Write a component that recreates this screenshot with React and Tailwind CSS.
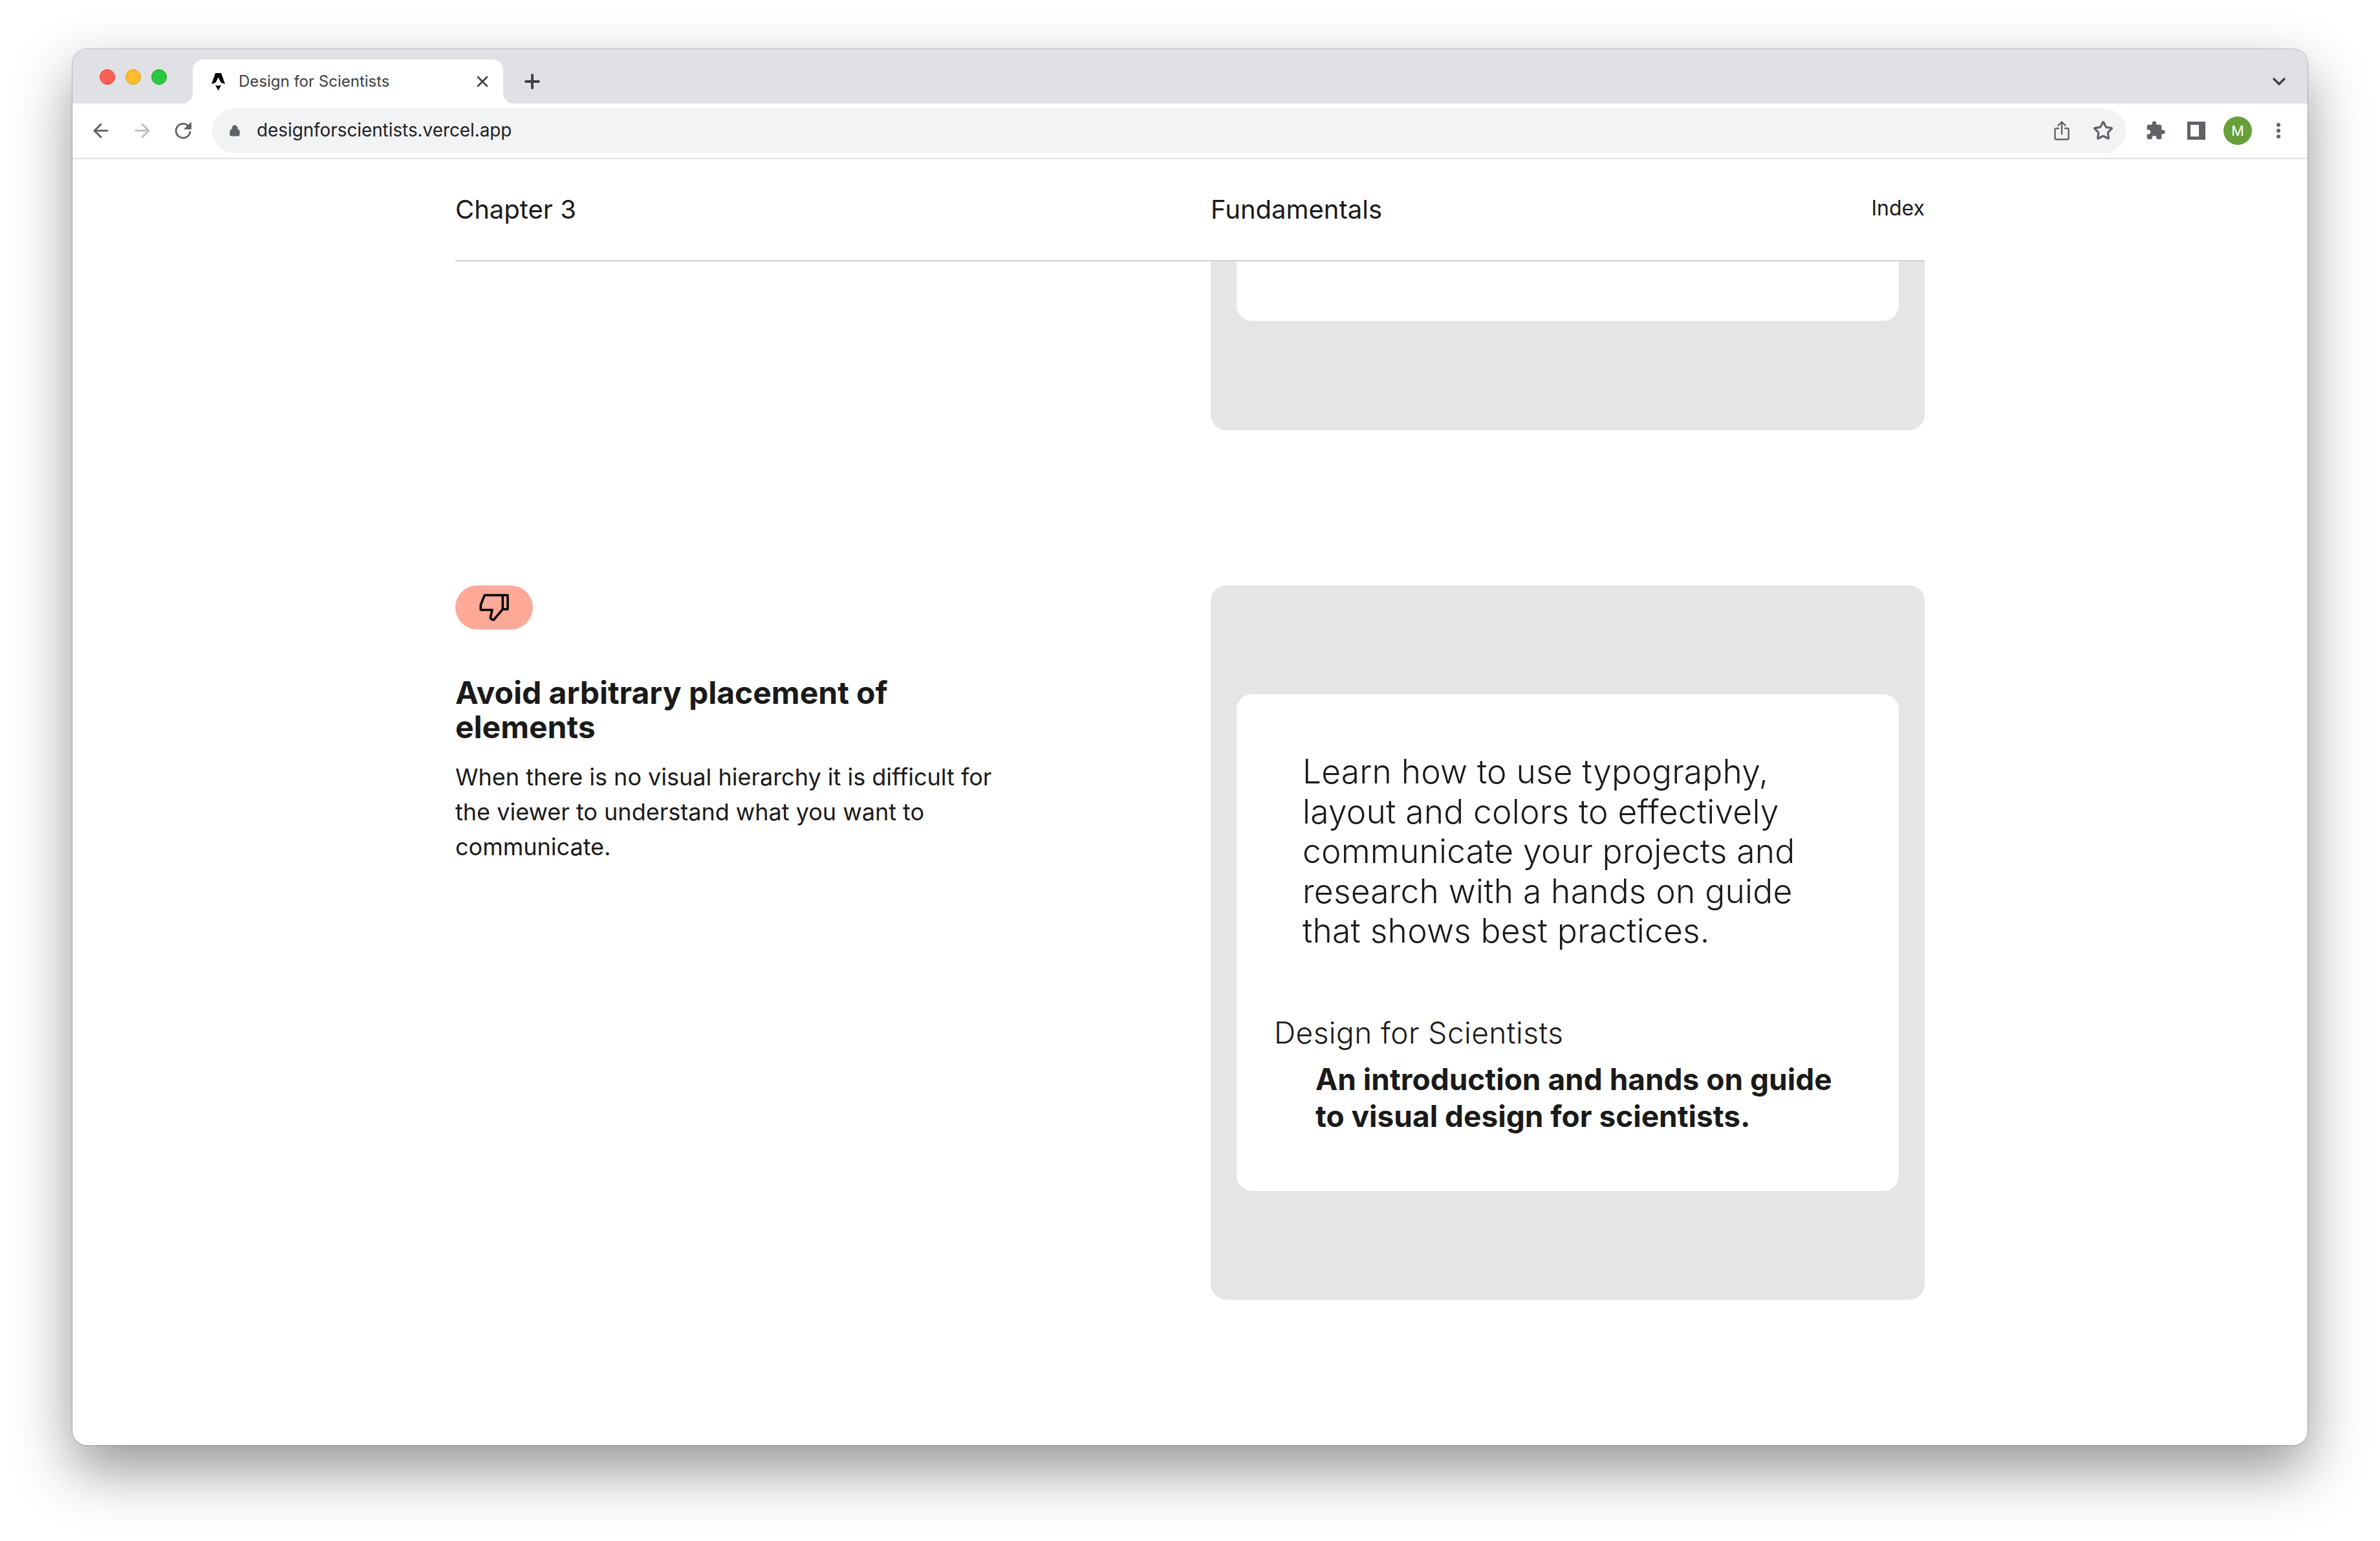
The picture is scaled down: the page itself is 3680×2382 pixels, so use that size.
import { Plus, Star, X, ChevronDown, ArrowLeft, ArrowRight, Lock } from 'lucide-react';

function TrafficLights() {
    return (
        <div className="flex gap-4 pl-[42px] pt-[31px] pr-10">
            <span className="size-6 rounded-full border border-[#e0443e] bg-[#ff5f57]" />
            <span className="size-6 rounded-full border border-[#dea123] bg-[#febc2e]" />
            <span className="size-6 rounded-full border border-[#1aab29] bg-[#28c840]" />
        </div>
    );
}

function Favicon() {
    return (
        <svg width="21" height="27" viewBox="0 0 21 27" className="shrink-0">
            <path d="M6 0 H15 L21 17 L14.5 14.5 L10.5 6.5 L6.5 14.5 L0 17 Z" fill="#000" />
            <path d="M6 18.5 Q10.5 20.5 15 18.5 L13.5 21.5 L10.5 27 L7.5 21.5 Z" fill="#000" />
        </svg>
    );
}

function Tab() {
    return (
        <div className="relative mt-4 flex h-[68px] w-[480px] items-center rounded-t-2xl bg-white pl-[29px] pr-[18px]">
            <span className="absolute bottom-0 left-[-16px] size-4 bg-white">
                <span className="block size-4 rounded-br-2xl bg-[#dfe1e5]" />
            </span>
            <span className="absolute bottom-0 right-[-16px] size-4 bg-white">
                <span className="block size-4 rounded-bl-2xl bg-[#dfe1e5]" />
            </span>
            <Favicon />
            <span className="ml-[21px] flex-1 text-[24px] text-[#3c4043]">Design for Scientists</span>
            <X size={28} strokeWidth={2.2} className="text-[#3c4043]" />
        </div>
    );
}

function TabStrip() {
    return (
        <div className="flex h-[84px] items-start bg-[#dfe1e5]">
            <TrafficLights />
            <Tab />
            <div className="ml-[28px] mt-[33px] text-[#3c4043]">
                <Plus size={34} strokeWidth={2.8} />
            </div>
            <div className="ml-auto mr-[28px] mt-[34px] text-[#3c4043]">
                <ChevronDown size={32} strokeWidth={2.4} />
            </div>
        </div>
    );
}

function ReloadIcon() {
    return (
        <svg width="30" height="30" viewBox="0 0 30 30" fill="none">
            <path d="M25 17 A11 11 0 1 1 21.5 7" stroke="#5f6368" strokeWidth="2.8" strokeLinecap="round" />
            <path d="M27 1 V13 H15 Z" fill="#5f6368" />
        </svg>
    );
}

function ShareIcon() {
    return (
        <svg width="24" height="30" viewBox="0 0 24 30" fill="none" stroke="#5f6368" strokeWidth="2.4" strokeLinecap="round" strokeLinejoin="round">
            <path d="M7 11.5 H3 Q1.5 11.5 1.5 13 V26.5 Q1.5 28.5 3.5 28.5 H20.5 Q22.5 28.5 22.5 26.5 V13 Q22.5 11.5 21 11.5 H17" />
            <path d="M12 20 V2 M6.5 7 L12 1.5 L17.5 7" />
        </svg>
    );
}

function PuzzleIcon() {
    return (
        <svg width="32" height="32" viewBox="0 0 24 24" fill="#5f6368">
            <path d="M20.5 11H19V7c0-1.1-.9-2-2-2h-4V3.5C13 2.12 11.88 1 10.5 1S8 2.12 8 3.5V5H4c-1.1 0-1.99.9-1.99 2v3.8H3.5c1.49 0 2.7 1.21 2.7 2.7s-1.21 2.7-2.7 2.7H2V20c0 1.1.9 2 2 2h3.8v-1.5c0-1.49 1.21-2.7 2.7-2.7 1.49 0 2.7 1.21 2.7 2.7V22H17c1.1 0 2-.9 2-2v-4h1.5c1.38 0 2.5-1.12 2.5-2.5S21.88 11 20.5 11z" />
        </svg>
    );
}

function Toolbar() {
    return (
        <div className="flex h-[86px] items-center border-b-2 border-[#dfe0e2] bg-white pl-3">
            <div className="flex w-16 justify-center text-[#5f6368]">
                <ArrowLeft size={34} strokeWidth={2.1} />
            </div>
            <div className="flex w-16 justify-center text-[#bdc1c6]">
                <ArrowRight size={34} strokeWidth={2.1} />
            </div>
            <div className="flex w-16 justify-center">
                <ReloadIcon />
            </div>
            <div className="ml-3 flex h-[68px] w-[2960px] items-center rounded-full bg-[#f1f3f4] pl-[26px] pr-[20px]">
                <Lock size={18} fill="#5f6368" className="text-[#5f6368]" strokeWidth={2.4} />
                <span className="ml-[25px] flex-1 text-[27.8px] text-[#202124]">designforscientists.vercel.app</span>
                <ShareIcon />
                <Star size={32} strokeWidth={2.4} className="ml-[36px] text-[#5f6368]" />
            </div>
            <div className="ml-[29px] flex items-center">
                <PuzzleIcon />
                <span className="ml-[33px] flex h-7 w-7 justify-end border-[5px] border-r-[10px] border-[#5f6368] bg-white" />
                <span className="ml-[28px] flex size-11 items-center justify-center rounded-full bg-[#689f38] text-[22px] text-white">M</span>
                <div className="ml-[38px] flex flex-col gap-[3px]">
                    <span className="size-[6px] rounded-full bg-[#5f6368]" />
                    <span className="size-[6px] rounded-full bg-[#5f6368]" />
                    <span className="size-[6px] rounded-full bg-[#5f6368]" />
                </div>
            </div>
        </div>
    );
}

function ThumbsDownIcon() {
    return (
        <svg width="48" height="46" viewBox="0 0 48 46" fill="none" stroke="#000" strokeWidth="3.6" strokeLinejoin="round">
            <path d="M9.3 4 H45 V25.7 H37.3 L23.3 42.3 Q18.5 41 18.3 39 L21 26.7 H3.3 V19 Z" />
            <path d="M37.3 4 V25.7" />
        </svg>
    );
}

export default function App() {
    return (
        <div className="h-[2382px] overflow-hidden bg-white pl-[112px] pt-[76px] font-['Inter',sans-serif] text-[#1a1a1a] [font-optical-sizing:none]">
            <div className="h-[2158px] w-[3456px] overflow-hidden rounded-[22px] bg-white shadow-[0_0_0_1px_rgba(0,0,0,0.22),0_38px_90px_rgba(0,0,0,0.42)]">
                <TabStrip />
                <Toolbar />
                <div className="mx-auto w-[2272px]">
                    <header className="grid h-[158px] grid-cols-[1168px_1fr] items-center border-b-2 border-[#cfcfcf]">
                        <span className="text-[40px]">Chapter 3</span>
                        <div className="flex items-center justify-between">
                            <span className="text-[40px]">Fundamentals</span>
                            <span className="pb-1 text-[32px]">Index</span>
                        </div>
                    </header>

                    <div className="ml-[1168px] h-[261px] rounded-b-3xl bg-[#e5e5e5] px-10">
                        <div className="h-[92px] rounded-b-3xl bg-white" />
                    </div>

                    <section className="mt-[240px] grid grid-cols-[1168px_1fr]">
                        <div>
                            <div className="flex h-[68px] w-[120px] items-center justify-center rounded-full bg-[#ffa999]">
                                <ThumbsDownIcon />
                            </div>
                            <h2 className="mt-[72px] w-[860px] text-[48px] font-bold leading-[1.1]">
                                Avoid arbitrary placement of elements
                            </h2>
                            <p className="mt-[23px] w-[860px] text-[36px] leading-[54px]">
                                When there is no visual hierarchy it is difficult for the viewer to understand what you want to communicate.
                            </p>
                        </div>
                        <div className="flex h-[1104px] items-center rounded-3xl bg-[#e5e5e5] px-10">
                            <div className="h-[768px] w-full rounded-3xl bg-white pl-[58px] pt-[89px]">
                                <p className="ml-[44px] w-[800px] text-[51.5px] font-[350] leading-[61.5px] tracking-[0.2px]">
                                    Learn how to use typography, layout and colors to effectively communicate your projects and research with a hands on guide that shows best practices.
                                </p>
                                <p className="mt-[99px] text-[46px] font-[350] leading-[1.2] tracking-[0.45px]">Design for Scientists</p>
                                <p className="ml-16 mt-[16px] w-[830px] text-[46px] font-bold leading-[57px]">
                                    An introduction and hands on guide to visual design for scientists.
                                </p>
                            </div>
                        </div>
                    </section>
                </div>
            </div>
        </div>
    );
}
